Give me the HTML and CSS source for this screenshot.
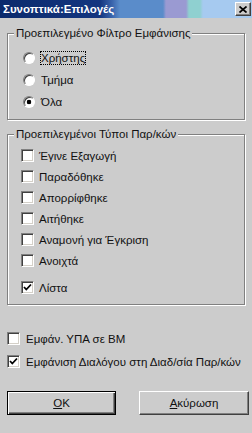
FILE: index.html
```html
<!DOCTYPE html>
<html lang="el">
<head>
  <meta charset="UTF-8">
  <title>Συνοπτικά:Επιλογές</title>
  <link rel="stylesheet" href="styles.css">
</head>
<body>
  <div class="titlebar">
    <span class="title">Συνοπτικά:Επιλογές</span>
    <span class="close">
      <svg width="8" height="7" viewBox="0 0 8 7"><path d="M0.5 0.5 L7.5 6.5 M7.5 0.5 L0.5 6.5" stroke="#000" stroke-width="1.7" fill="none"/></svg>
    </span>
  </div>
  <div class="content">
    <fieldset class="group">
      <legend>Προεπιλεγμένο Φίλτρο Εμφάνισης</legend>
      <div class="list filter">
        <div class="row"><span class="radio"></span><span class="text focus">Χρήστης</span></div>
        <div class="row"><span class="radio"></span><span class="text">Τμήμα</span></div>
        <div class="row"><span class="radio checked"></span><span class="text">Όλα</span></div>
      </div>
    </fieldset>

    <fieldset class="group types">
      <legend>Προεπιλεγμένοι Τύποι Παρ/κών</legend>
      <div class="list">
        <div class="row"><span class="check"></span><span class="text">Έγινε Εξαγωγή</span></div>
        <div class="row"><span class="check"></span><span class="text">Παραδόθηκε</span></div>
        <div class="row"><span class="check"></span><span class="text">Απορρίφθηκε</span></div>
        <div class="row"><span class="check"></span><span class="text">Αιτήθηκε</span></div>
        <div class="row"><span class="check"></span><span class="text">Αναμονή για Έγκριση</span></div>
        <div class="row"><span class="check"></span><span class="text">Ανοιχτά</span></div>
        <div class="row last"><span class="check"><svg width="9" height="9" viewBox="0 0 9 9"><path d="M1 4 L3.3 6.5 L8 1.5" stroke="#000" stroke-width="1.8" fill="none"/></svg></span><span class="text">Λίστα</span></div>
      </div>
    </fieldset>

    <div class="options">
      <div class="row"><span class="check"></span><span class="text">Εμφάν. ΥΠΑ σε ΒΜ</span></div>
      <div class="row"><span class="check"><svg width="9" height="9" viewBox="0 0 9 9"><path d="M1 4 L3.3 6.5 L8 1.5" stroke="#000" stroke-width="1.8" fill="none"/></svg></span><span class="text">Εμφάνιση Διαλόγου στη Διαδ/σία Παρ/κών</span></div>
    </div>

    <div class="buttons">
      <button class="btn default"><u>O</u>K</button>
      <button class="btn cancel"><u>Α</u>κύρωση</button>
    </div>
  </div>
</body>
</html>
```

FILE: styles.css
```css
*{
  margin:0;
  padding:0;
  box-sizing:border-box;
}
body{
  width:252px;
  height:433px;
  overflow:hidden;
  background:#cccccc;
  font-family:"Liberation Sans", Arial, sans-serif;
  font-size:11.5px;
  color:#111;
}
.titlebar{
  height:18px;
  display:flex;
  align-items:center;
  justify-content:space-between;
  padding:0 1px 0 3px;
  background:linear-gradient(to right,
    #0b2a6c 0px, #143680 100px, #3a64ac 112px,
    #5a8cca 120px, #5a8cca 163px,
    #9a9ad2 166px, #9a9ad2 186px,
    #8fd0d0 189px, #8fd0d0 200px,
    #a6caf0 203px, #a6caf0 252px);
}
.title{
  color:#fff;
  font-weight:bold;
  font-size:11.5px;
}
.close{
  width:16px;
  height:14px;
  display:flex;
  align-items:center;
  justify-content:center;
  background:#cccccc;
  border:1px solid;
  border-color:#fff #404040 #404040 #fff;
  box-shadow:inset -1px -1px 0 #808080;
}
.content{
  display:flex;
  flex-direction:column;
  padding:9px 7px 0 7px;
}
.group{
  border:1px solid #808080;
  box-shadow:inset 1px 1px 0 #fff, 1px 1px 0 #fff;
}
.group legend{
  margin-left:6px;
  padding:0 2px;
  line-height:13px;
  background:#cccccc;
}
.list{
  display:flex;
  flex-direction:column;
  padding:7px 0 6px 13px;
}
.filter{
  padding-left:15px;
}
.filter .row{
  height:22px;
}
.types{
  margin-top:8px;
}
.types .list{
  padding-top:4px;
}
.row{
  height:21px;
  display:flex;
  align-items:center;
}
.row.last{
  margin-top:6px;
}
.radio{
  width:12px;
  height:12px;
  flex:none;
  border-radius:50%;
  background:#fff;
  border:1px solid;
  border-color:#808080 #fff #fff #808080;
  box-shadow:inset 1px 1px 0 #404040;
}
.radio.checked{
  background:radial-gradient(circle at 50% 50%, #000 2px, #fff 2.6px);
}
.radio + .text{
  margin-left:5px;
  padding:1px;
}
.focus{
  outline:1px dotted #000;
  outline-offset:-1px;
}
.check{
  width:13px;
  height:13px;
  flex:none;
  display:flex;
  align-items:center;
  justify-content:center;
  background:#fff;
  border:1px solid;
  border-color:#808080 #fff #fff #808080;
  box-shadow:inset 1px 1px 0 #404040, inset -1px -1px 0 #d4d0c8;
}
.check + .text{
  margin-left:5px;
}
.options{
  display:flex;
  flex-direction:column;
  margin-top:22px;
}
.options .row{
  height:23px;
}
.options .check + .text{
  margin-left:6px;
}
.buttons{
  display:flex;
  gap:23px;
  width:242px;
  margin-top:18px;
}
.btn{
  height:24px;
  font-family:"Liberation Sans", Arial, sans-serif;
  font-size:11.5px;
  color:#111;
  background:#cccccc;
  outline:none;
}
.btn.default{
  width:109px;
  border:1px solid #000;
  box-shadow:inset 1px 1px 0 #fff, inset -1px -1px 0 #404040, inset -2px -2px 0 #808080;
}
.btn.cancel{
  width:110px;
  border:1px solid;
  border-color:#fff #404040 #404040 #fff;
  box-shadow:inset -1px -1px 0 #808080;
}
```
